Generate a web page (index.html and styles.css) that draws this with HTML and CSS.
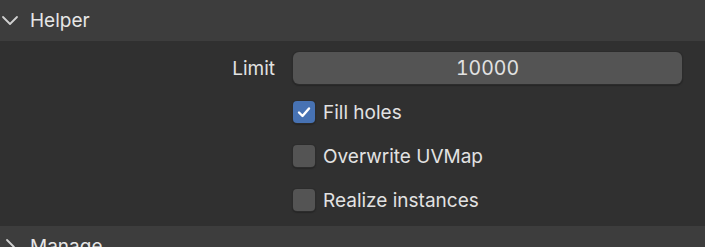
FILE: index.html
```html
<html lang="en">
	<head>
		<meta charset="UTF-8" />
		<meta name="viewport" content="width=device-width, initial-scale=1.0" />
		<title>Helper</title>
		<link rel="stylesheet" href="styles.css">
	</head>
	<body>
		<div class="panel-header">
			<svg class="chevron" width="18" height="12" viewBox="0 0 18 12">
				<path d="M2 2 L9 9 L16 2" fill="none" stroke="#d0d0d0" stroke-width="1.8" stroke-linecap="round" stroke-linejoin="round" />
			</svg>
			<span class="panel-title">Helper</span>
		</div>

		<div class="panel-body">
			<div class="row">
				<span class="label">Limit</span>
				<div class="number-field">10000</div>
			</div>
			<div class="row">
				<span></span>
				<label class="check">
					<span class="box checked">
						<svg width="16" height="16" viewBox="0 0 16 16">
							<path d="M3 8.5 L6.5 12 L13 4.5" fill="none" stroke="#fff" stroke-width="2.4" stroke-linecap="round" stroke-linejoin="round" />
						</svg>
					</span>
					Fill holes
				</label>
			</div>
			<div class="row">
				<span></span>
				<label class="check"><span class="box"></span>Overwrite UVMap</label>
			</div>
			<div class="row">
				<span></span>
				<label class="check"><span class="box"></span>Realize instances</label>
			</div>
		</div>

		<div class="panel-header">
			<svg class="chevron" width="18" height="18" viewBox="0 0 18 18">
				<path d="M6 2 L13 9 L6 16" fill="none" stroke="#d0d0d0" stroke-width="1.8" stroke-linecap="round" stroke-linejoin="round" />
			</svg>
			<span class="panel-title">Manage</span>
		</div>
	</body>
</html>
```

FILE: styles.css
```css
body {
	margin: 0;
	background-color: #303030;
	font-family: Inter, "Noto Sans", sans-serif;
	color: #e2e2e2;
	overflow: hidden;
}
.panel-header {
	display: flex;
	align-items: center;
	height: 41px;
	padding-left: 1px;
	background-color: #3d3d3d;
	gap: 11px;
}
.panel-title {
	font-size: 19px;
	color: #e6e6e6;
}
.panel-body {
	padding: 5px 23px 4px 0;
}
.row {
	display: grid;
	grid-template-columns: 275px 1fr;
	column-gap: 18px;
	align-items: center;
	height: 44px;
}
.label {
	text-align: right;
	font-size: 19px;
}
.number-field {
	height: 32px;
	line-height: 32px;
	text-align: center;
	font-size: 19.5px;
	font-feature-settings: "tnum";
	background-color: #545454;
	border-radius: 6px;
	box-shadow: 0 0 0 1px #2c2c2c, 0 1px 1px 1px #262626;
}
.check {
	display: flex;
	align-items: center;
	gap: 8px;
	font-size: 19px;
}
.box {
	display: flex;
	align-items: center;
	justify-content: center;
	width: 22px;
	height: 22px;
	border-radius: 4px;
	background-color: #545454;
	box-shadow: 0 0 0 1px #2c2c2c, 0 1px 1px 1px #262626;
}
.box.checked {
	background-color: #4772b3;
}
```
